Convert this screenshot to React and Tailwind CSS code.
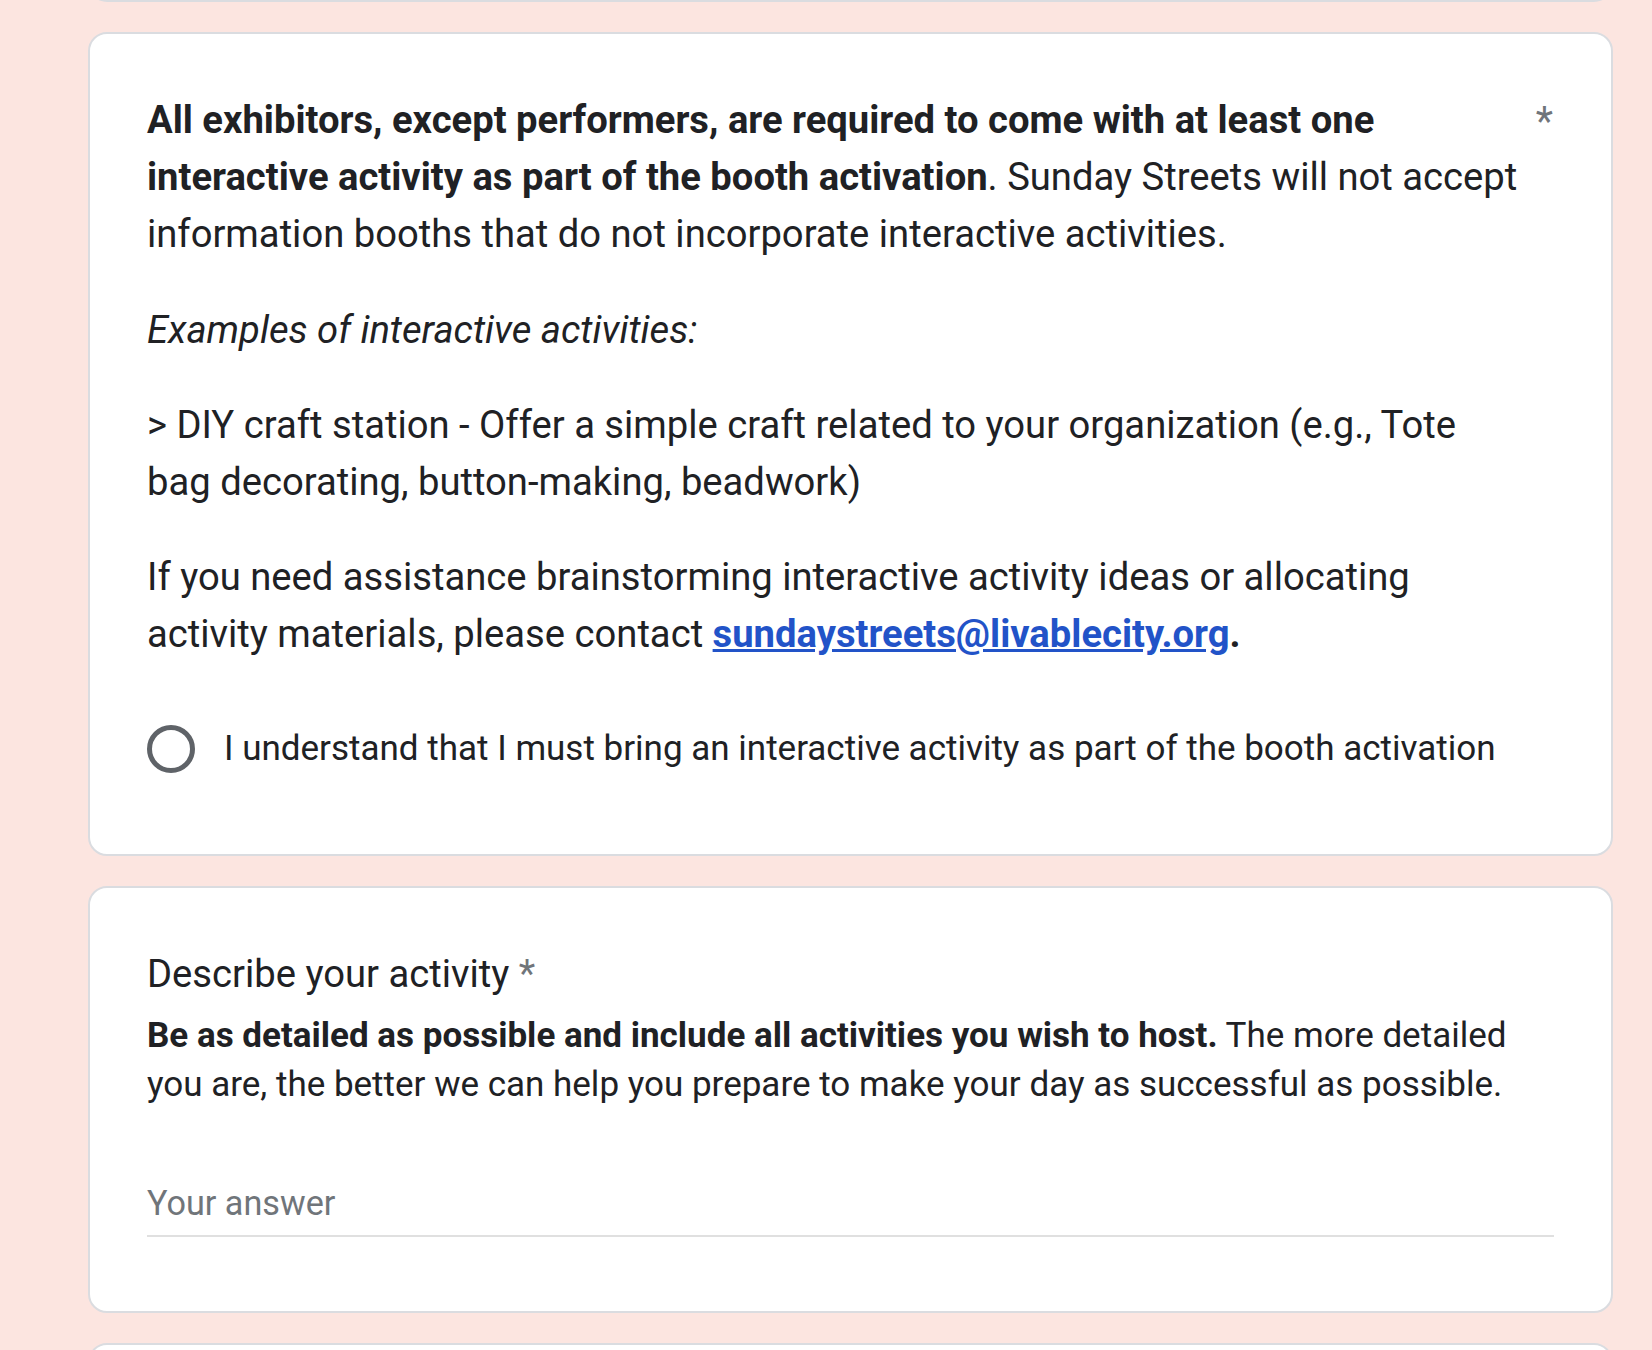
import React from 'react';

function App() {
    return (
        <div className="min-h-screen bg-[#fce5e0] font-['Roboto',sans-serif] text-[#202124] overflow-hidden">
            <div className="ml-[88px] w-[1525px] flex flex-col gap-[30px]">
                {/* Bottom edge of the previous card */}
                <div className="h-[20px] -mt-[18px] bg-white rounded-b-[19px] border-2 border-[#dadce0]"></div>

                {/* Interactive activity acknowledgement */}
                <div className="bg-white rounded-[19px] border-2 border-[#dadce0] px-[57px] pt-[58px] pb-[81px]">
                    <div className="flex">
                        <div className="w-[1378px] text-[38.2px] leading-[57px]">
                            <p>
                                <span className="font-bold">All exhibitors, except performers, are required to come with at least one interactive activity as part of the booth activation</span>. Sunday Streets will not accept information booths that do not incorporate interactive activities.
                            </p>
                            <p className="mt-[39px] italic">Examples of interactive activities:</p>
                            <p className="mt-[38px]">&gt; DIY craft station - Offer a simple craft related to your organization (e.g., Tote bag decorating, button-making, beadwork)</p>
                            <p className="mt-[38px]">
                                If you need assistance brainstorming interactive activity ideas or allocating activity materials, please contact{' '}
                                <a href="#" className="font-bold text-[#2253c8] underline">sundaystreets@livablecity.org</a>
                                <span className="font-bold">.</span>
                            </p>
                        </div>
                        <div className="flex-1 flex justify-end pt-[1px] pr-[1px] text-[40px] leading-[57px] text-[#70757a]">*</div>
                    </div>

                    <div className="mt-[62px] flex items-center gap-[29px]">
                        <div className="w-[48px] h-[48px] rounded-full border-[5px] border-[#5f6368] shrink-0"></div>
                        <span className="text-[35px] leading-[48px]">I understand that I must bring an interactive activity as part of the booth activation</span>
                    </div>
                </div>

                {/* Describe your activity */}
                <div className="bg-white rounded-[19px] border-2 border-[#dadce0] px-[57px] pt-[58px] pb-[74px]">
                    <div className="text-[38.2px] leading-[57px]">
                        Describe your activity <span className="text-[#70757a]">*</span>
                    </div>
                    <p className="mt-[9px] text-[35px] leading-[48.5px]">
                        <span className="font-bold">Be as detailed as possible and include all activities you wish to host.</span> The more detailed you are, the better we can help you prepare to make your day as successful as possible.
                    </p>
                    <div className="mt-[70px] pb-[8px] border-b-2 border-[#e0e0e0] text-[34.2px] leading-[48px] text-[#70757a]">
                        Your answer
                    </div>
                </div>

                {/* Next card */}
                <div className="h-[200px] bg-white rounded-[19px] border-2 border-[#dadce0]"></div>
            </div>
        </div>
    );
}

export default App;
